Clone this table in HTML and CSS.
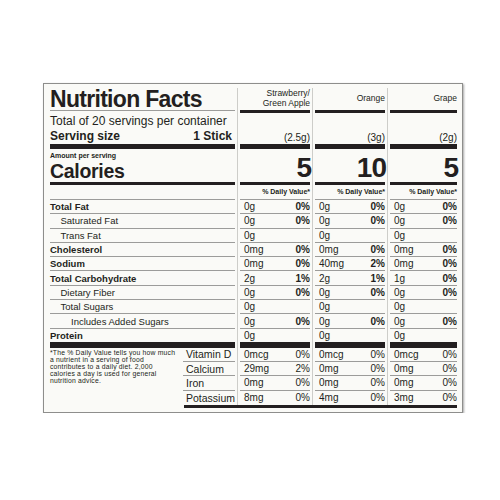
FILE: index.html
```html
<!DOCTYPE html>
<html lang="en">
<head>
  <meta charset="UTF-8" />
  <meta name="viewport" content="width=device-width, initial-scale=1.0"/>
  <title>Nutrition Facts</title>
  <link rel="stylesheet" href="styles.css">
</head>
<body>
  <div class="label">
    <div class="cols">

      <!-- label column -->
      <div class="main">
        <div class="r head"><h1>Nutrition Facts</h1></div>
        <div class="r serv">
          <div class="per">Total of 20 servings per container</div>
          <div class="size"><b>Serving size</b><b>1 Stick</b></div>
        </div>
        <div class="r cal">
          <div class="amt">Amount per serving</div>
          <div class="cal-t">Calories</div>
        </div>
        <div class="r dv"></div>
        <div class="r n"><b>Total Fat</b></div>
        <div class="r n i1">Saturated Fat</div>
        <div class="r n i1">Trans Fat</div>
        <div class="r n"><b>Cholesterol</b></div>
        <div class="r n"><b>Sodium</b></div>
        <div class="r n"><b>Total Carbohydrate</b></div>
        <div class="r n i1">Dietary Fiber</div>
        <div class="r n i1">Total Sugars</div>
        <div class="r n i2">Includes Added Sugars</div>
        <div class="r n last"><b>Protein</b></div>
        <div class="bottom">
          <p class="note">*The % Daily Value tells you how much<br>a nutrient in a serving of food<br>contributes to a daily diet. 2,000<br>calories a day is used for general<br>nutrition advice.</p>
          <div class="vits">
            <div class="r v">Vitamin D</div>
            <div class="r v">Calcium</div>
            <div class="r v">Iron</div>
            <div class="r v">Potassium</div>
          </div>
        </div>
      </div>

      <!-- strawberry / green apple -->
      <div class="col">
        <div class="r head"><span>Strawberry/<br>Green Apple</span></div>
        <div class="r serv">(2.5g)</div>
        <div class="r cal"><span class="big">5</span></div>
        <div class="r dv">% Daily Value*</div>
        <div class="r n"><span>0g</span><b>0%</b></div>
        <div class="r n"><span>0g</span><b>0%</b></div>
        <div class="r n"><span>0g</span></div>
        <div class="r n"><span>0mg</span><b>0%</b></div>
        <div class="r n"><span>0mg</span><b>0%</b></div>
        <div class="r n"><span>2g</span><b>1%</b></div>
        <div class="r n"><span>0g</span><b>0%</b></div>
        <div class="r n"><span>0g</span></div>
        <div class="r n"><span>0g</span><b>0%</b></div>
        <div class="r n last"><span>0g</span></div>
        <div class="r v"><span>0mcg</span><span>0%</span></div>
        <div class="r v"><span>29mg</span><span>2%</span></div>
        <div class="r v"><span>0mg</span><span>0%</span></div>
        <div class="r v"><span>8mg</span><span>0%</span></div>
      </div>

      <!-- orange -->
      <div class="col">
        <div class="r head"><span>Orange</span></div>
        <div class="r serv">(3g)</div>
        <div class="r cal"><span class="big">10</span></div>
        <div class="r dv">% Daily Value*</div>
        <div class="r n"><span>0g</span><b>0%</b></div>
        <div class="r n"><span>0g</span><b>0%</b></div>
        <div class="r n"><span>0g</span></div>
        <div class="r n"><span>0mg</span><b>0%</b></div>
        <div class="r n"><span>40mg</span><b>2%</b></div>
        <div class="r n"><span>2g</span><b>1%</b></div>
        <div class="r n"><span>0g</span><b>0%</b></div>
        <div class="r n"><span>0g</span></div>
        <div class="r n"><span>0g</span><b>0%</b></div>
        <div class="r n last"><span>0g</span></div>
        <div class="r v"><span>0mcg</span><span>0%</span></div>
        <div class="r v"><span>0mg</span><span>0%</span></div>
        <div class="r v"><span>0mg</span><span>0%</span></div>
        <div class="r v"><span>4mg</span><span>0%</span></div>
      </div>

      <!-- grape -->
      <div class="col">
        <div class="r head"><span>Grape</span></div>
        <div class="r serv">(2g)</div>
        <div class="r cal"><span class="big">5</span></div>
        <div class="r dv">% Daily Value*</div>
        <div class="r n"><span>0g</span><b>0%</b></div>
        <div class="r n"><span>0g</span><b>0%</b></div>
        <div class="r n"><span>0g</span></div>
        <div class="r n"><span>0mg</span><b>0%</b></div>
        <div class="r n"><span>0mg</span><b>0%</b></div>
        <div class="r n"><span>1g</span><b>0%</b></div>
        <div class="r n"><span>0g</span><b>0%</b></div>
        <div class="r n"><span>0g</span></div>
        <div class="r n"><span>0g</span><b>0%</b></div>
        <div class="r n last"><span>0g</span></div>
        <div class="r v"><span>0mcg</span><span>0%</span></div>
        <div class="r v"><span>0mg</span><span>0%</span></div>
        <div class="r v"><span>0mg</span><span>0%</span></div>
        <div class="r v"><span>3mg</span><span>0%</span></div>
      </div>
    </div>
    <div class="rule"></div>
  </div>
</body>
</html>
```

FILE: styles.css
```css
:root {
  --ink: #231f20;
  --thin: #9c9c9a;
  --sep: #cdcdc9;
  --paper: #fafaf7;
}

body {
  margin: 0;
  background: #fff;
  font-family: 'Liberation Sans', Arial, sans-serif;
  color: var(--ink);
}

.label {
  width: 420px;
  height: 330px;
  margin: 83px 0 0 43px;
  box-sizing: border-box;
  padding: 4px 0 4px 6px;
  background: var(--paper);
  border: 1px solid #8e8e8c;
  box-shadow: 1px 1px 2px rgba(0,0,0,0.35);
}

.cols {
  display: flex;
}

.r {
  box-sizing: border-box;
}

/* label column */
.main {
  width: 187px;
  padding-right: 2px;
  box-sizing: border-box;
}

.main .head {
  height: 23px;
  margin-bottom: 2px;
  border-bottom: 1px solid var(--thin);
}

h1 {
  margin: 0;
  font-size: 23px;
  line-height: 22px;
  letter-spacing: -0.7px;
  font-weight: bold;
}

.serv {
  height: 36px;
  border-bottom: 5px solid var(--ink);
}

.main .serv {
  padding-top: 1px;
  font-size: 12px;
  line-height: 15px;
}

.size {
  display: flex;
  justify-content: space-between;
  padding-right: 3px;
}

.cal {
  height: 36px;
  border-bottom: 3px solid var(--ink);
}

.main .cal {
  padding-top: 2px;
}

.amt {
  font-size: 7px;
  font-weight: bold;
  line-height: 9px;
}

.cal-t {
  font-size: 19.5px;
  font-weight: bold;
  line-height: 22px;
  letter-spacing: -0.3px;
}

.dv {
  height: 15px;
  border-bottom: 1px solid var(--thin);
  padding-top: 2px;
  font-size: 7px;
  font-weight: bold;
  line-height: 9px;
  text-align: right;
}

.n {
  height: 14.3px;
  border-bottom: 1px solid var(--thin);
  display: flex;
  align-items: center;
  font-size: 9.5px;
}

.n.last {
  height: 19px;
  border-bottom: 6px solid var(--ink);
}

.main .i1 { padding-left: 10.5px; }
.main .i2 { padding-left: 21px; }

.bottom {
  display: flex;
}

.note {
  width: 134px;
  margin: 0;
  padding-top: 1px;
  font-size: 6.8px;
  line-height: 7.2px;
  letter-spacing: 0.2px;
}

.vits {
  flex: 1;
}

.v {
  height: 14.3px;
  border-bottom: 1px solid var(--thin);
  display: flex;
  align-items: center;
  font-size: 10.5px;
}

.v:last-child {
  border-bottom: none;
}

.main .v {
  padding-left: 2.5px;
}

/* value columns */
.col {
  width: 75px;
  box-sizing: border-box;
  border-left: 1px solid var(--sep);
  padding: 0 2px;
}

.col:last-child {
  padding-right: 5px;
}

.col .head {
  height: 25px;
  border-bottom: 3px solid var(--ink);
  padding-bottom: 3px;
  display: flex;
  flex-direction: column;
  justify-content: center;
  align-items: flex-end;
  text-align: right;
  font-size: 8.5px;
  line-height: 10px;
}

.col .serv {
  display: flex;
  align-items: flex-end;
  justify-content: flex-end;
  font-size: 10px;
  line-height: 13px;
}

.col .cal {
  display: flex;
  align-items: flex-end;
  justify-content: flex-end;
}

.big {
  font-size: 28px;
  font-weight: bold;
  line-height: 28px;
  letter-spacing: -1px;
  margin-right: -1px;
}

.col .n,
.col .v {
  justify-content: space-between;
  padding-left: 4px;
  font-size: 10px;
}

.rule {
  height: 3px;
  margin: 0 5px 0 134px;
  background: var(--ink);
}
```
